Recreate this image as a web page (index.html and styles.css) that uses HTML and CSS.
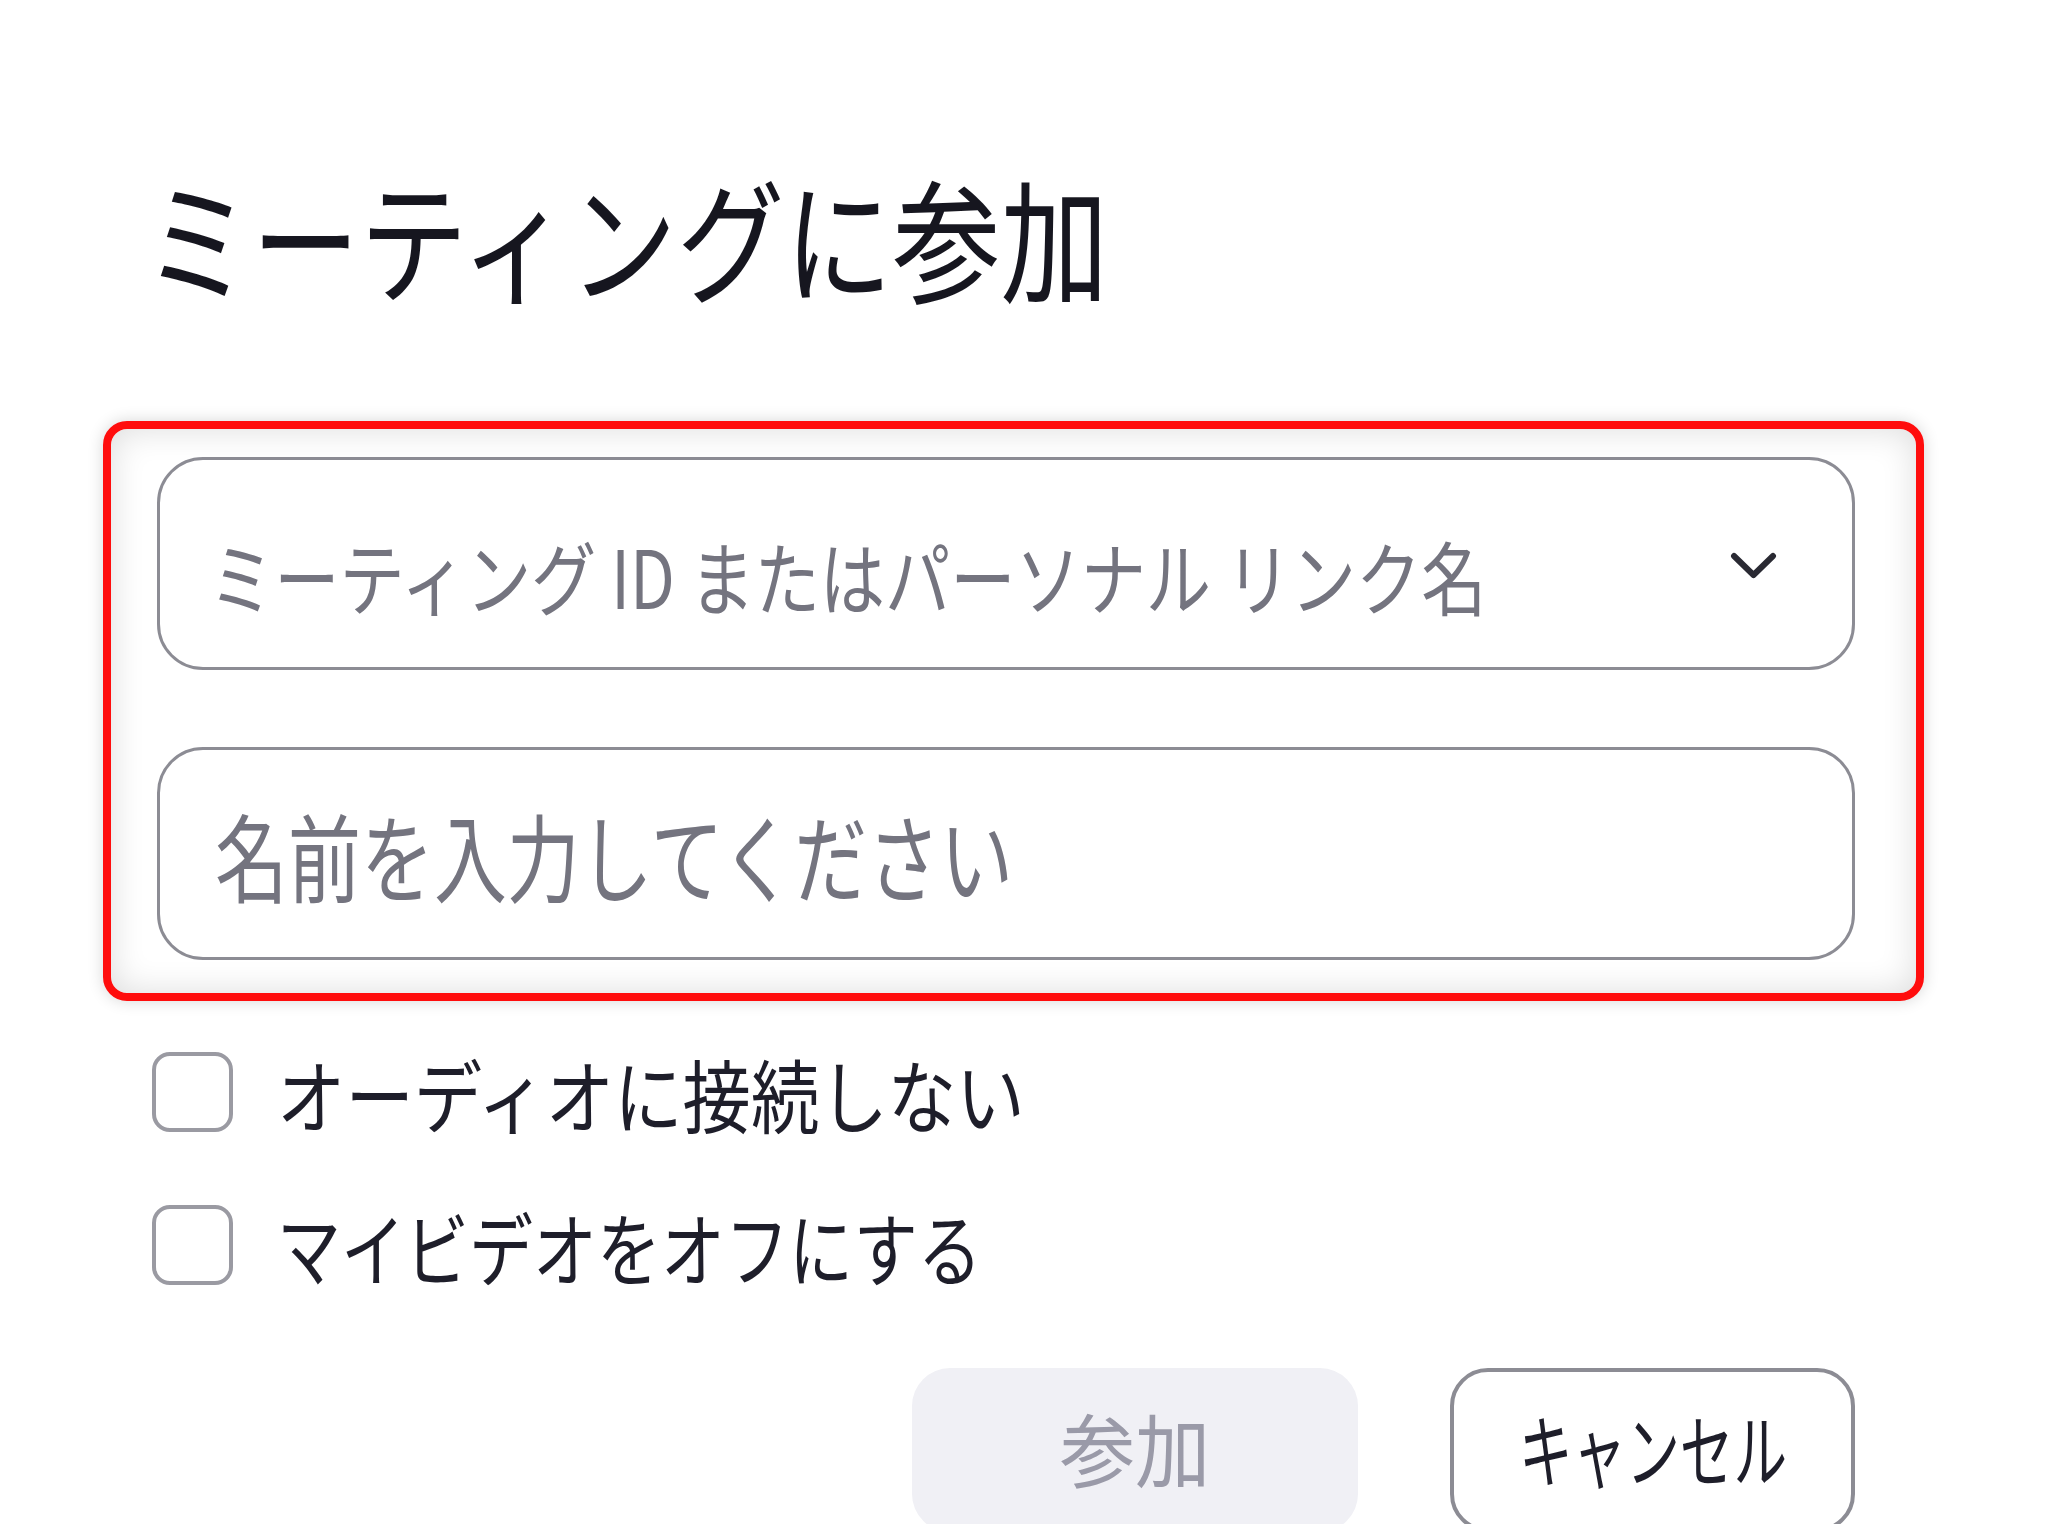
FILE: index.html
```html
<!DOCTYPE html>
<html lang="ja">
<head>
<meta charset="utf-8">
<title>ミーティングに参加</title>
<link rel="stylesheet" href="styles.css">
</head>
<body>
<main class="dialog">
  <h1 class="title"><span class="sx">ミーティングに参加</span></h1>
  <div class="fields">
    <div class="field select">
      <span class="ph ph-id sx">ミーティング ID またはパーソナル リンク名</span>
      <svg class="chevron" width="47" height="28" viewBox="0 0 47 28" aria-hidden="true"><path d="M4 4 L23.5 23 L43 4" fill="none" stroke="#2a2a33" stroke-width="6" stroke-linecap="round" stroke-linejoin="round"/></svg>
    </div>
    <div class="field">
      <span class="ph ph-name sx">名前を入力してください</span>
    </div>
  </div>
  <div class="checks">
    <label class="check"><span class="box"></span><span class="lbl lbl-audio sx">オーディオに接続しない</span></label>
    <label class="check"><span class="box"></span><span class="lbl lbl-video sx">マイビデオをオフにする</span></label>
  </div>
  <div class="actions">
    <button class="btn join" disabled><span class="sx">参加</span></button>
    <button class="btn cancel"><span class="sx">キャンセル</span></button>
  </div>
</main>
</body>
</html>
```
FILE: styles.css
```css
html, body {
  margin: 0;
  padding: 0;
  background: #ffffff;
  height: 1524px;
  overflow: hidden;
}
body {
  font-family: "Noto Sans CJK JP", "Noto Sans", sans-serif;
  color: #232333;
}
.dialog {
  width: 1821px;
  padding: 0 0 0 103px;
  display: flex;
  flex-direction: column;
}
.sx {
  display: inline-block;
  white-space: nowrap;
  transform-origin: left center;
  transform: scaleX(var(--sx, 0.8));
}
.title {
  margin: 169px 0 0 41px;
  font-size: 133px;
  line-height: 133px;
  height: 133px;
  font-weight: 400;
  color: #16161f;
}
.title .sx { --sx: 0.811; }

.fields {
  margin-top: 119px;
  border: 8px solid #ff0d0d;
  border-radius: 24px;
  padding: 28px 61px 33px 46px;
  display: flex;
  flex-direction: column;
  gap: 77px;
  background: #ffffff;
  box-shadow: 0 0 16px rgba(0, 0, 0, 0.16), inset 0 0 34px rgba(0, 0, 0, 0.14);
}
.field {
  height: 207px;
  border: 3px solid #8c8c94;
  border-radius: 46px;
  background: #ffffff;
  display: flex;
  align-items: center;
  padding: 0 75px 0 49px;
}
.ph {
  color: #74747f;
  line-height: 1;
}
.ph-id {
  flex: 1 1 auto;
  min-width: 0;
  font-size: 80px;
  margin-top: 20px;
  --sx: 0.815;
}
.ph-name {
  font-size: 96px;
  margin-left: 6px;
  --sx: 0.76;
}
.chevron {
  flex: none;
  margin-top: 4px;
}

.checks {
  margin: 51px 0 0 49px;
  display: flex;
  flex-direction: column;
  gap: 73px;
}
.check {
  display: flex;
  align-items: center;
  gap: 44px;
  height: 80px;
}
.box {
  flex: none;
  box-sizing: border-box;
  width: 81px;
  height: 80px;
  border: 4px solid #9a9aa2;
  border-radius: 18px;
}
.lbl {
  font-size: 80px;
  line-height: 1;
  color: #1e1e2a;
}
.lbl-audio { --sx: 0.855; }
.lbl-video { --sx: 0.80; }

.actions {
  margin-top: 83px;
  display: flex;
  justify-content: flex-end;
  gap: 92px;
  padding-right: 69px;
}
.btn {
  font-family: inherit;
  height: 164px;
  border-radius: 38px;
  font-size: 80px;
  line-height: 1;
  padding: 0 0 8px 0;
  display: flex;
  align-items: center;
  justify-content: center;
}
.btn .sx { transform-origin: center center; }
.join {
  width: 446px;
  background: #f0f0f5;
  border: none;
  color: #9a9aa8;
}
.join .sx { --sx: 0.94; }
.cancel {
  width: 405px;
  background: #ffffff;
  border: 4px solid #8c8c94;
  color: #1e1e2a;
}
.cancel .sx { --sx: 0.67; }
```
